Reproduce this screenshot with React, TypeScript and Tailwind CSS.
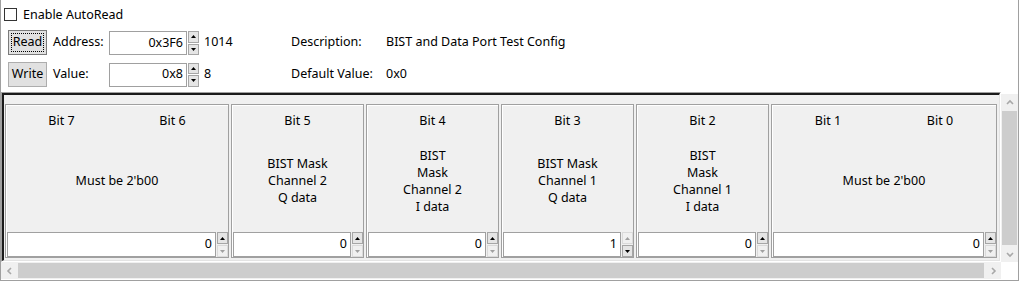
import React from "react";

function Tri({ up, on }: { up: boolean; on: boolean }) {
  return (
    <svg width="5" height="3" viewBox="0 0 5 3">
      <polygon points={up ? "0,3 2.5,0 5,3" : "0,0 2.5,3 5,0"} fill={on ? "#000000" : "#a0a0a0"} />
    </svg>
  );
}

function Spin({ upOn = true, downOn = true }: { upOn?: boolean; downOn?: boolean }) {
  const on = "flex flex-1 items-center justify-center border border-[#a6a6a6] bg-[#e5e5e5]";
  const off = "flex flex-1 items-center justify-center border border-[#dadada] bg-[#f0f0f0]";
  return (
    <div className="flex w-[11px] flex-col gap-[1px]">
      <div className={upOn ? on : off}>
        <Tri up on={upOn} />
      </div>
      <div className={downOn ? on : off}>
        <Tri up={false} on={downOn} />
      </div>
    </div>
  );
}

function Chev({ dir }: { dir: "l" | "r" | "u" | "d" }) {
  const pts =
    dir === "l" ? "5,1 2,4 5,7" : dir === "r" ? "3,1 6,4 3,7" : dir === "u" ? "1,5 4,2 7,5" : "1,3 4,6 7,3";
  return (
    <svg width="8" height="8" viewBox="0 0 8 8">
      <polyline points={pts} fill="none" stroke="#a8a8a8" strokeWidth="1.6" />
    </svg>
  );
}

type CellProps = {
  w: string;
  bits: string[];
  desc: string[];
  value: string;
  upOn?: boolean;
  downOn?: boolean;
};

function Cell({ w, bits, desc, value, upOn, downOn }: CellProps) {
  return (
    <div className={`flex h-[154px] flex-col border border-[#a0a0a0] shadow-[inset_1px_1px_0_#ffffff] ${w}`}>
      <div className="flex pt-[7px] leading-[17px]">
        {bits.map((b) => (
          <div key={b} className="flex-1 text-center">
            {b}
          </div>
        ))}
      </div>
      <div className="flex flex-1 flex-col items-center justify-center text-center leading-[17px]">
        {desc.map((d) => (
          <div key={d}>{d}</div>
        ))}
      </div>
      <div className="flex h-[25px] pl-[1px]">
        <div className="flex flex-1 items-center justify-end border border-[#a0a0a0] bg-white pr-[3px]">{value}</div>
        <div className="ml-[1px] flex">
          <Spin upOn={upOn} downOn={downOn} />
        </div>
      </div>
    </div>
  );
}

export default function App() {
  return (
    <div className="flex h-[281px] w-[1019px] flex-col border-b border-l border-r border-[#a0a0a0] bg-white font-['Noto_Sans',sans-serif] text-[12.5px] text-black">
      {/* row 1 */}
      <div className="ml-[3px] mt-[8px] flex h-[13px] items-center">
        <div className="h-[13px] w-[13px] border border-[#333333] bg-white" />
        <span className="ml-[6px] leading-[13px]">Enable AutoRead</span>
      </div>

      {/* row 2 */}
      <div className="ml-[7px] mt-[9px] flex h-[25px] items-center">
        <div className="flex h-[25px] w-[39px] border border-[#7a7a7a] bg-[#e1e1e1] p-[2px]">
          <div className="flex flex-1 items-center justify-center border border-dotted border-black">Read</div>
        </div>
        <div className="ml-[6px] w-[56px]">Address:</div>
        <div className="flex h-[24px] self-end">
          <div className="flex w-[78px] items-center justify-end border border-[#a0a0a0] bg-white pr-[3px]">0x3F6</div>
          <div className="ml-[1px] flex">
            <Spin />
          </div>
        </div>
        <div className="ml-[5px] w-[87px]">1014</div>
        <div className="w-[95px]">Description:</div>
        <div>BIST and Data Port Test Config</div>
      </div>

      {/* row 3 */}
      <div className="ml-[7px] mt-[7px] flex h-[25px] items-center">
        <div className="flex h-[25px] w-[39px] items-center justify-center border border-[#adadad] bg-[#e1e1e1]">Write</div>
        <div className="ml-[6px] w-[56px]">Value:</div>
        <div className="flex h-[24px]">
          <div className="flex w-[78px] items-center justify-end border border-[#a0a0a0] bg-white pr-[3px]">0x8</div>
          <div className="ml-[1px] flex">
            <Spin />
          </div>
        </div>
        <div className="ml-[5px] w-[87px]">8</div>
        <div className="w-[95px]">Default Value:</div>
        <div>0x0</div>
      </div>

      {/* scroll area */}
      <div className="mt-[5px] flex">
        <div className="flex w-[1000px] flex-col">
          <div className="h-[170px] border-b border-l border-r border-t border-b-white border-l-[#a0a0a0] border-r-white border-t-[#a0a0a0]">
            <div className="flex h-full gap-[2px] border-b border-l-2 border-r border-t-2 border-b-[#e3e3e3] border-l-[#1a1a1a] border-r-[#e3e3e3] border-t-[#1a1a1a] bg-[#f0f0f0] pl-[1px] pt-[9px]">
              <Cell w="w-[224px]" bits={["Bit 7", "Bit 6"]} desc={["Must be 2'b00"]} value="0" upOn downOn={false} />
              <Cell w="w-[133px]" bits={["Bit 5"]} desc={["BIST Mask", "Channel 2", "Q data"]} value="0" upOn downOn={false} />
              <Cell w="w-[133px]" bits={["Bit 4"]} desc={["BIST", "Mask", "Channel 2", "I data"]} value="0" upOn downOn={false} />
              <Cell w="w-[133px]" bits={["Bit 3"]} desc={["BIST Mask", "Channel 1", "Q data"]} value="1" upOn={false} downOn />
              <Cell w="w-[133px]" bits={["Bit 2"]} desc={["BIST", "Mask", "Channel 1", "I data"]} value="0" upOn downOn={false} />
              <Cell w="w-[226px]" bits={["Bit 1", "Bit 0"]} desc={["Must be 2'b00"]} value="0" upOn downOn={false} />
            </div>
          </div>
          {/* horizontal scrollbar */}
          <div className="flex h-[17px] bg-[#f0f0f0]">
            <div className="flex w-[17px] items-center justify-center">
              <Chev dir="l" />
            </div>
            <div className="my-[1px] flex-1 bg-[#cdcdcd]" />
            <div className="flex w-[17px] items-center justify-center">
              <Chev dir="r" />
            </div>
          </div>
        </div>
        {/* vertical scrollbar */}
        <div className="flex w-[17px] flex-col">
          <div className="mt-[2px] flex h-[168px] flex-col bg-[#f0f0f0]">
            <div className="flex h-[17px] items-center justify-center">
              <Chev dir="u" />
            </div>
            <div className="mx-[1px] flex-1 bg-[#cdcdcd]" />
            <div className="flex h-[17px] items-center justify-center">
              <Chev dir="d" />
            </div>
          </div>
        </div>
      </div>
    </div>
  );
}
